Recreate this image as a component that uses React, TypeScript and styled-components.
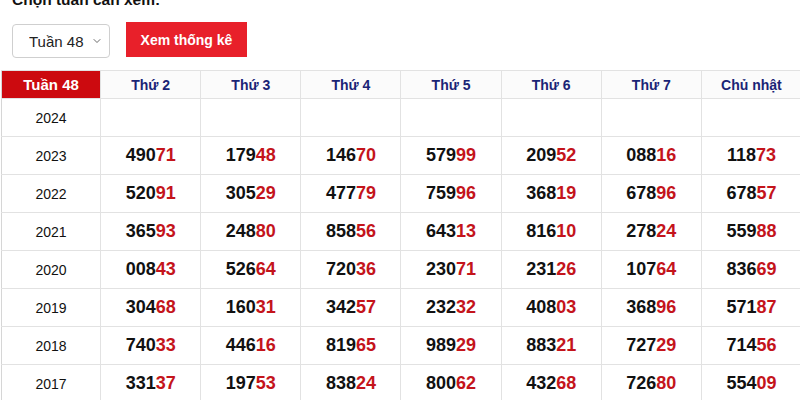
import styled, { createGlobalStyle } from 'styled-components';
import { ChevronDown } from 'lucide-react';

const GlobalStyle = createGlobalStyle`
  html, body {
    margin: 0;
    padding: 0;
    background: #ffffff;
    font-family: 'Liberation Sans', Arial, sans-serif;
    overflow: hidden;
  }
`;

const days = ['Thứ 2', 'Thứ 3', 'Thứ 4', 'Thứ 5', 'Thứ 6', 'Thứ 7', 'Chủ nhật'];

const rows: { year: string; nums: string[] }[] = [
  { year: '2024', nums: [] },
  { year: '2023', nums: ['49071', '17948', '14670', '57999', '20952', '08816', '11873'] },
  { year: '2022', nums: ['52091', '30529', '47779', '75996', '36819', '67896', '67857'] },
  { year: '2021', nums: ['36593', '24880', '85856', '64313', '81610', '27824', '55988'] },
  { year: '2020', nums: ['00843', '52664', '72036', '23071', '23126', '10764', '83669'] },
  { year: '2019', nums: ['30468', '16031', '34257', '23232', '40803', '36896', '57187'] },
  { year: '2018', nums: ['74033', '44616', '81965', '98929', '88321', '72729', '71456'] },
  { year: '2017', nums: ['33137', '19753', '83824', '80062', '43268', '72680', '55409'] },
];

const App = () => {
  return (
    <Page>
      <GlobalStyle />
      <Title>Chọn tuần cần xem:</Title>
      <Controls>
        <SelectWrap>
          <WeekSelect defaultValue="48">
            <option value="48">Tuần 48</option>
          </WeekSelect>
          <Chevron size={12} strokeWidth={1.6} />
        </SelectWrap>
        <ViewButton type="button">Xem thống kê</ViewButton>
      </Controls>
      <StatTable>
        <thead>
          <tr>
            <WeekHead>Tuần 48</WeekHead>
            {days.map((d) => (
              <DayHead key={d}>{d}</DayHead>
            ))}
          </tr>
        </thead>
        <tbody>
          {rows.map((r) => (
            <tr key={r.year}>
              <YearCell>{r.year}</YearCell>
              {days.map((d, i) => {
                const n = r.nums[i];
                return (
                  <NumCell key={d}>
                    {n && (
                      <>
                        {n.slice(0, 3)}
                        <Tail>{n.slice(3)}</Tail>
                      </>
                    )}
                  </NumCell>
                );
              })}
            </tr>
          ))}
        </tbody>
      </StatTable>
    </Page>
  );
};

const Page = styled.div`
  width: 800px;
  height: 400px;
  overflow: hidden;
`;

const Title = styled.div`
  margin: -9px 0 0 12px;
  font-size: 15.5px;
  line-height: 18px;
  font-weight: 700;
  color: #111;
`;

const Controls = styled.div`
  display: flex;
  align-items: flex-start;
  gap: 16px;
  margin: 13px 0 12px 12px;
`;

const SelectWrap = styled.div`
  position: relative;
  margin-top: 2px;
`;

const WeekSelect = styled.select`
  appearance: none;
  -webkit-appearance: none;
  width: 98px;
  height: 34px;
  padding: 0 0 0 16px;
  border: 1px solid #cfcfcf;
  border-radius: 4px;
  background: #fff;
  font-family: 'Liberation Sans', Arial, sans-serif;
  font-size: 15px;
  color: #222;
`;

const Chevron = styled(ChevronDown)`
  position: absolute;
  right: 7px;
  top: 11px;
  color: #444;
  pointer-events: none;
`;

const ViewButton = styled.button`
  width: 121px;
  height: 35px;
  border: none;
  background: #e8202a;
  color: #fff;
  font-family: 'Liberation Sans', Arial, sans-serif;
  font-size: 14px;
  font-weight: 700;
  padding: 0;
`;

const StatTable = styled.table`
  margin-left: 1px;
  border-collapse: collapse;
  table-layout: fixed;
  width: 801px;
  border-left: 1px solid #d6d6d6;
`;

const WeekHead = styled.th`
  width: 98px;
  height: 27px;
  padding: 0;
  background: #cc0a0f;
  color: #fff;
  font-size: 15px;
  font-weight: 700;
  border: 1px solid #e2e2e2;
  border-left: none;
`;

const DayHead = styled.th`
  width: 99px;
  height: 27px;
  padding: 0;
  background: #fbfbfb;
  color: #1a2476;
  font-size: 14px;
  font-weight: 700;
  border: 1px solid #e2e2e2;
`;

const YearCell = styled.td`
  height: 37px;
  padding: 0;
  text-align: center;
  font-size: 14px;
  color: #111;
  border: 1px solid #e2e2e2;
  border-left: none;
`;

const NumCell = styled.td`
  height: 37px;
  padding: 0;
  text-align: center;
  font-size: 18px;
  font-weight: 700;
  color: #111;
  border: 1px solid #e2e2e2;
`;

const Tail = styled.span`
  color: #c4141b;
`;

export default App;
